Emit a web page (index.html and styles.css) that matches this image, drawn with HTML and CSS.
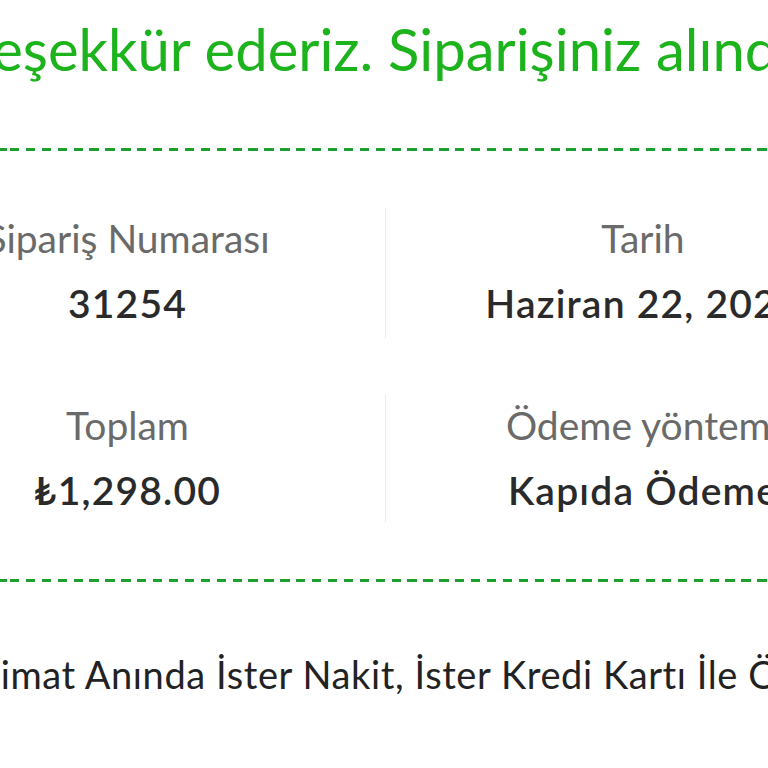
FILE: index.html
```html
<!DOCTYPE html>
<html lang="tr">
<head>
<meta charset="utf-8">
<title>Sipariş alındı</title>
<link rel="stylesheet" href="styles.css">
</head>
<body>
<main class="page">
  <h1 class="title">Teşekkür ederiz. Siparişiniz alındı.</h1>
  <div class="rule"></div>
  <ul class="overview">
    <li class="item">
      <span class="label">Sipariş Numarası</span>
      <strong class="value num">31254</strong>
    </li>
    <li class="item item-right">
      <span class="label">Tarih</span>
      <strong class="value">Haziran 22, 2024</strong>
    </li>
    <li class="item">
      <span class="label">Toplam</span>
      <strong class="value">₺1,298.00</strong>
    </li>
    <li class="item item-right">
      <span class="label">Ödeme yöntemi</span>
      <strong class="value">Kapıda Ödeme</strong>
    </li>
  </ul>
  <div class="rule"></div>
  <p class="note">Teslimat Anında İster Nakit, İster Kredi Kartı İle Ödeme</p>
</main>
</body>
</html>
```
FILE: styles.css
```css
html, body {
  margin: 0;
  padding: 0;
  background: #ffffff;
  overflow: hidden;
}

body {
  font-family: Lato, "Open Sans", sans-serif;
}

.page {
  width: 1030px;
  margin-left: calc(50% - 514px);
}

.title {
  margin: 0;
  padding-top: 14px;
  font-size: 58px;
  line-height: 70px;
  font-weight: 400;
  color: #1db31d;
  text-align: center;
  white-space: nowrap;
}

.rule {
  height: 3px;
  margin-top: 64px;
  background-image: repeating-linear-gradient(to right, #1c9f2c 0 9.3px, transparent 9.3px 15.9px);
  background-position: 140px 0;
}

.overview {
  list-style: none;
  margin: 57px 0 0;
  padding: 0;
  display: grid;
  grid-template-columns: 1fr 1fr;
  row-gap: 57px;
}

.item {
  display: flex;
  flex-direction: column;
  align-items: center;
  height: 130px;
  box-sizing: border-box;
  padding-top: 5px;
  white-space: nowrap;
}

.item:nth-child(n+3) {
  height: 127px;
}

.item-right {
  border-left: 1px solid #ececec;
}

.label {
  font-size: 39px;
  line-height: 50px;
  font-weight: 400;
  color: #6a6a6a;
}

.value {
  margin-top: 15px;
  font-size: 39px;
  line-height: 50px;
  font-weight: 600;
  letter-spacing: 1.2px;
  color: #2a2a2a;
}

.overview + .rule {
  margin-top: 57px;
}

.note {
  margin: 67px 0 0;
  padding-left: 65px;
  font-size: 38px;
  line-height: 50px;
  letter-spacing: 0.6px;
  color: #222222;
  white-space: nowrap;
}
```
